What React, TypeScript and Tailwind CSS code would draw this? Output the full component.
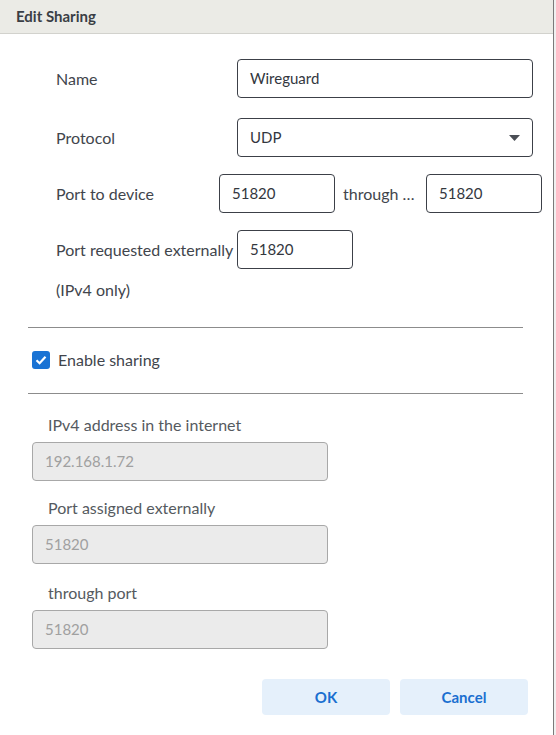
import React from "react";

const font = { fontFamily: "Lato, 'Noto Sans', sans-serif" };

function TextBox({ value, className = "" }: { value: string; className?: string }) {
  return (
    <div
      className={`h-[39px] flex items-center px-3 border border-[#3c4048] rounded-[4px] text-[15px] text-[#33373e] bg-white ${className}`}
    >
      {value}
    </div>
  );
}

function ReadOnlyBox({ label, value, top }: { label: string; value: string; top: string }) {
  return (
    <div className={top}>
      <div className="pl-[48px] text-[16px] leading-[20px] text-[#555a60]">{label}</div>
      <div className="ml-[32px] mt-[7px] w-[296px] h-[39px] flex items-center px-3 rounded-[4px] border border-[#a8a8a8] bg-[#ebebeb] text-[15px] text-[#a0a0a0]">
        {value}
      </div>
    </div>
  );
}

export default function App() {
  return (
    <div className="w-[556px] h-[735px] bg-[#f0f0f0]" style={font}>
      <div className="w-[554px] h-[735px] bg-white border-r border-[#7a7a7a] flex flex-col">
        <div className="h-[34px] bg-[#ebebe6] border-b border-[#d2d2cd] flex items-center pl-4">
          <h1 className="text-[15px] font-bold text-[#3a3e45]">Edit Sharing</h1>
        </div>

        <div className="flex items-center mt-[25px]">
          <span className="pl-[56px] w-[237px] text-[16px] text-[#41454c]">Name</span>
          <TextBox value="Wireguard" className="w-[296px]" />
        </div>

        <div className="flex items-center mt-[20px]">
          <span className="pl-[56px] w-[237px] text-[16px] text-[#41454c]">Protocol</span>
          <div className="w-[296px] h-[39px] flex items-center justify-between pl-3 pr-[12px] border border-[#3c4048] rounded-[4px] text-[15px] text-[#33373e]">
            <span>UDP</span>
            <svg width="11" height="6" viewBox="0 0 11 6">
              <path d="M0 0 H11 L5.5 6 Z" fill="#4a4e55" />
            </svg>
          </div>
        </div>

        <div className="flex items-center mt-[17px]">
          <span className="pl-[56px] w-[219px] text-[16px] text-[#41454c]">Port to device</span>
          <TextBox value="51820" className="w-[116px]" />
          <span className="ml-[8px] w-[83px] text-[16px] text-[#41454c] whitespace-nowrap">through …</span>
          <TextBox value="51820" className="w-[116px]" />
        </div>

        <div className="flex items-center mt-[17px]">
          <span className="pl-[56px] w-[237px] text-[16px] text-[#41454c] whitespace-nowrap">Port requested externally</span>
          <TextBox value="51820" className="w-[116px]" />
        </div>

        <div className="pl-[56px] mt-[11px] text-[16px] leading-[20px] text-[#41454c]">(IPv4 only)</div>

        <div className="ml-[28px] w-[495px] mt-[27px] border-t border-[#8c8c8c]" />

        <label className="flex items-center mt-[22px] pl-[32px]">
          <span className="w-[18px] h-[18px] rounded-[3px] bg-[#1a73d4] flex items-center justify-center">
            <svg width="12" height="10" viewBox="0 0 12 10">
              <path d="M1.5 5.2 L4.6 8.2 L10.5 1.8" stroke="white" strokeWidth="2.2" fill="none" />
            </svg>
          </span>
          <span className="ml-[8px] text-[16px] leading-[20px] text-[#41454c]">Enable sharing</span>
        </label>

        <div className="ml-[28px] w-[495px] mt-[23px] border-t border-[#8c8c8c]" />

        <ReadOnlyBox label="IPv4 address in the internet" value="192.168.1.72" top="mt-[21px]" />
        <ReadOnlyBox label="Port assigned externally" value="51820" top="mt-[17px]" />
        <ReadOnlyBox label="through port" value="51820" top="mt-[19px]" />

        <div className="flex justify-end gap-[10px] pr-[25px] mt-[30px]">
          <button className="w-[128px] h-[36px] rounded-[4px] bg-[#e5f0fb] text-[15px] font-bold text-[#1a6fd0]">OK</button>
          <button className="w-[128px] h-[36px] rounded-[4px] bg-[#e5f0fb] text-[15px] font-bold text-[#1a6fd0]">Cancel</button>
        </div>
      </div>
    </div>
  );
}
